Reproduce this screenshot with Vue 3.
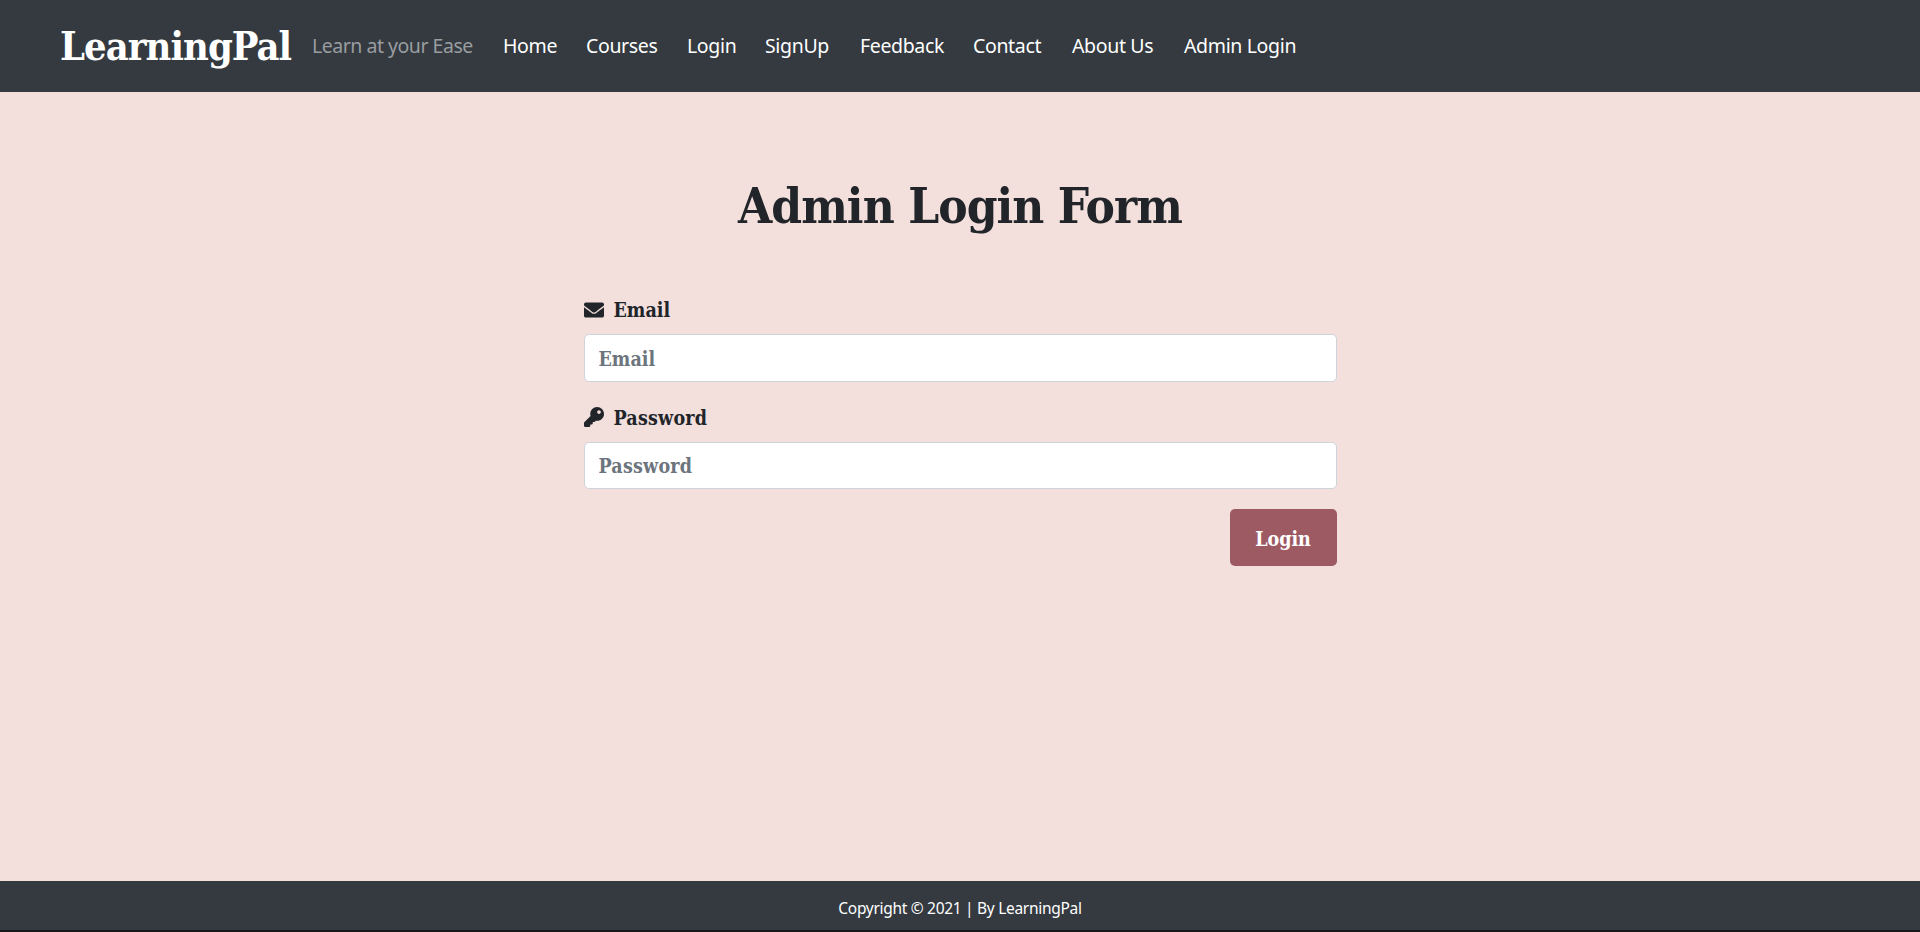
<script setup>
const links = [
  { label: 'Home', cls: 'home' },
  { label: 'Courses', cls: 'courses' },
  { label: 'Login', cls: 'login' },
  { label: 'SignUp', cls: 'signup' },
  { label: 'Feedback', cls: 'feedback' },
  { label: 'Contact', cls: 'contact' },
  { label: 'About Us', cls: 'about' },
  { label: 'Admin Login', cls: 'admin' },
]
</script>

<template>
  <div class="page">
    <header class="navbar">
      <a class="brand">LearningPal</a>
      <span class="tagline">Learn at your Ease</span>
      <nav class="links">
        <a v-for="l in links" :key="l.label" class="link" :class="l.cls">{{ l.label }}</a>
      </nav>
    </header>

    <main class="main">
      <h1 class="title">Admin Login Form</h1>
      <form class="form" @submit.prevent>
        <label class="label" for="email">
          <svg class="icon" viewBox="0 0 512 512"><path d="M502.3 190.8c3.9-3.1 9.7-.2 9.7 4.7V400c0 26.500-21.500 48-48 48H48c-26.500 0-48-21.500-48-48V195.600c0-5 5.700-7.800 9.700-4.700 22.400 17.400 52.100 39.500 154.100 113.600 21.100 15.400 56.700 47.800 92.200 47.600 35.700.3 72-32.800 92.300-47.600 102-74.100 131.600-96.300 154-113.700zM256 320c23.200.4 56.600-29.200 73.400-41.400 132.700-96.300 142.800-104.700 173.400-128.700 5.800-4.500 9.200-11.500 9.200-18.900v-19c0-26.500-21.500-48-48-48H48c-26.500 0-48 21.500-48 48v19c0 7.400 3.400 14.300 9.200 18.900 30.600 23.900 40.700 32.400 173.400 128.700 16.800 12.200 50.200 41.800 73.400 41.400z" /></svg>
          <span>Email</span>
        </label>
        <input id="email" class="input" type="email" placeholder="Email" />
        <label class="label second" for="password">
          <svg class="icon key" viewBox="0 0 512 512"><path d="M512 176.001C512 273.203 433.202 352 336 352c-11.220 0-22.190-1.062-32.827-3.069l-24.012 27.014A23.999 23.999 0 0 1 261.223 384H224v40c0 13.255-10.745 24-24 24h-40v40c0 13.255-10.745 24-24 24H24c-13.255 0-24-10.745-24-24v-78.059c0-6.365 2.529-12.470 7.029-16.971l161.802-161.802C163.108 213.814 160 195.271 160 176 160 78.798 238.797.001 335.999 0 433.488-.001 512 78.511 512 176.001zM336 128c0 26.510 21.490 48 48 48s48-21.490 48-48-21.490-48-48-48-48 21.490-48 48z" /></svg>
          <span class="password-text">Password</span>
        </label>
        <input id="password" class="input short password-text" type="password" placeholder="Password" />
        <button class="submit" type="submit">Login</button>
      </form>
    </main>

    <footer class="footer">Copyright © 2021 | By LearningPal</footer>
  </div>
</template>

<style>
body {
  margin: 0;
  background: #f3dfdc;
}
</style>

<style scoped>
.page {
  display: flex;
  flex-direction: column;
  height: 932px;
  overflow: hidden;
  background: #f3dfdc;
  color: #212529;
  font-family: "Noto Sans", "Open Sans", sans-serif;
}
.navbar {
  display: flex;
  align-items: center;
  flex: none;
  box-sizing: border-box;
  height: 92px;
  padding-left: 60px;
  background: #343a40;
  color: #fff;
  font-size: 19.5px;
  letter-spacing: -0.35px;
  white-space: nowrap;
}
.brand, .title, .label, .input, .submit {
  font-family: "DejaVu Serif Condensed", "DejaVu Serif", serif;
  font-stretch: condensed;
  font-weight: 700;
}
.brand {
  width: 252px;
  font-size: 39.5px;
  letter-spacing: -0.95px;
}
.tagline {
  width: 191px;
  padding-bottom: 2px;
  color: #9a9da0;
  letter-spacing: -0.48px;
}
.links {
  display: flex;
  padding-bottom: 2px;
}
.home { width: 83px; }
.courses { width: 101px; }
.login { width: 78px; }
.signup { width: 95px; }
.feedback { width: 113px; }
.contact { width: 99px; }
.about { width: 112px; }
.main {
  flex: 1;
  display: flex;
  flex-direction: column;
  align-items: center;
}
.title {
  margin: 84px 0 0;
  height: 60px;
  line-height: 60px;
  font-size: 49px;
  letter-spacing: -0.95px;
  white-space: nowrap;
}
.form {
  display: flex;
  flex-direction: column;
  width: 753px;
  margin-top: 59px;
}
.label {
  display: flex;
  align-items: center;
  gap: 10px;
  height: 30px;
  margin-bottom: 9px;
  font-size: 19.5px;
}
.second {
  margin-top: 21px;
}
.icon {
  width: 20px;
  height: 20px;
  fill: #212529;
}
.key {
  margin-bottom: 2px;
}
.password-text {
  letter-spacing: 0.2px;
}
.input {
  box-sizing: border-box;
  width: 753px;
  height: 48px;
  padding: 2px 14px 0;
  border: 1px solid #ced4da;
  border-radius: 5px;
  background: #fff;
  font-size: 19.5px;
  outline: none;
}
.short {
  height: 47px;
}
.input::placeholder {
  color: #6c757d;
  opacity: 1;
}
.submit {
  align-self: flex-end;
  width: 107px;
  height: 57px;
  margin-top: 20px;
  padding: 3px 0 0;
  border: 0;
  border-radius: 5px;
  background: #9e5a63;
  color: #fff;
  font-size: 19.5px;
}
.footer {
  flex: none;
  box-sizing: border-box;
  height: 51px;
  border-bottom: 2px solid #19191b;
  background: #343a40;
  color: #fff;
  font-size: 15.5px;
  letter-spacing: -0.3px;
  line-height: 55px;
  text-align: center;
}
</style>
